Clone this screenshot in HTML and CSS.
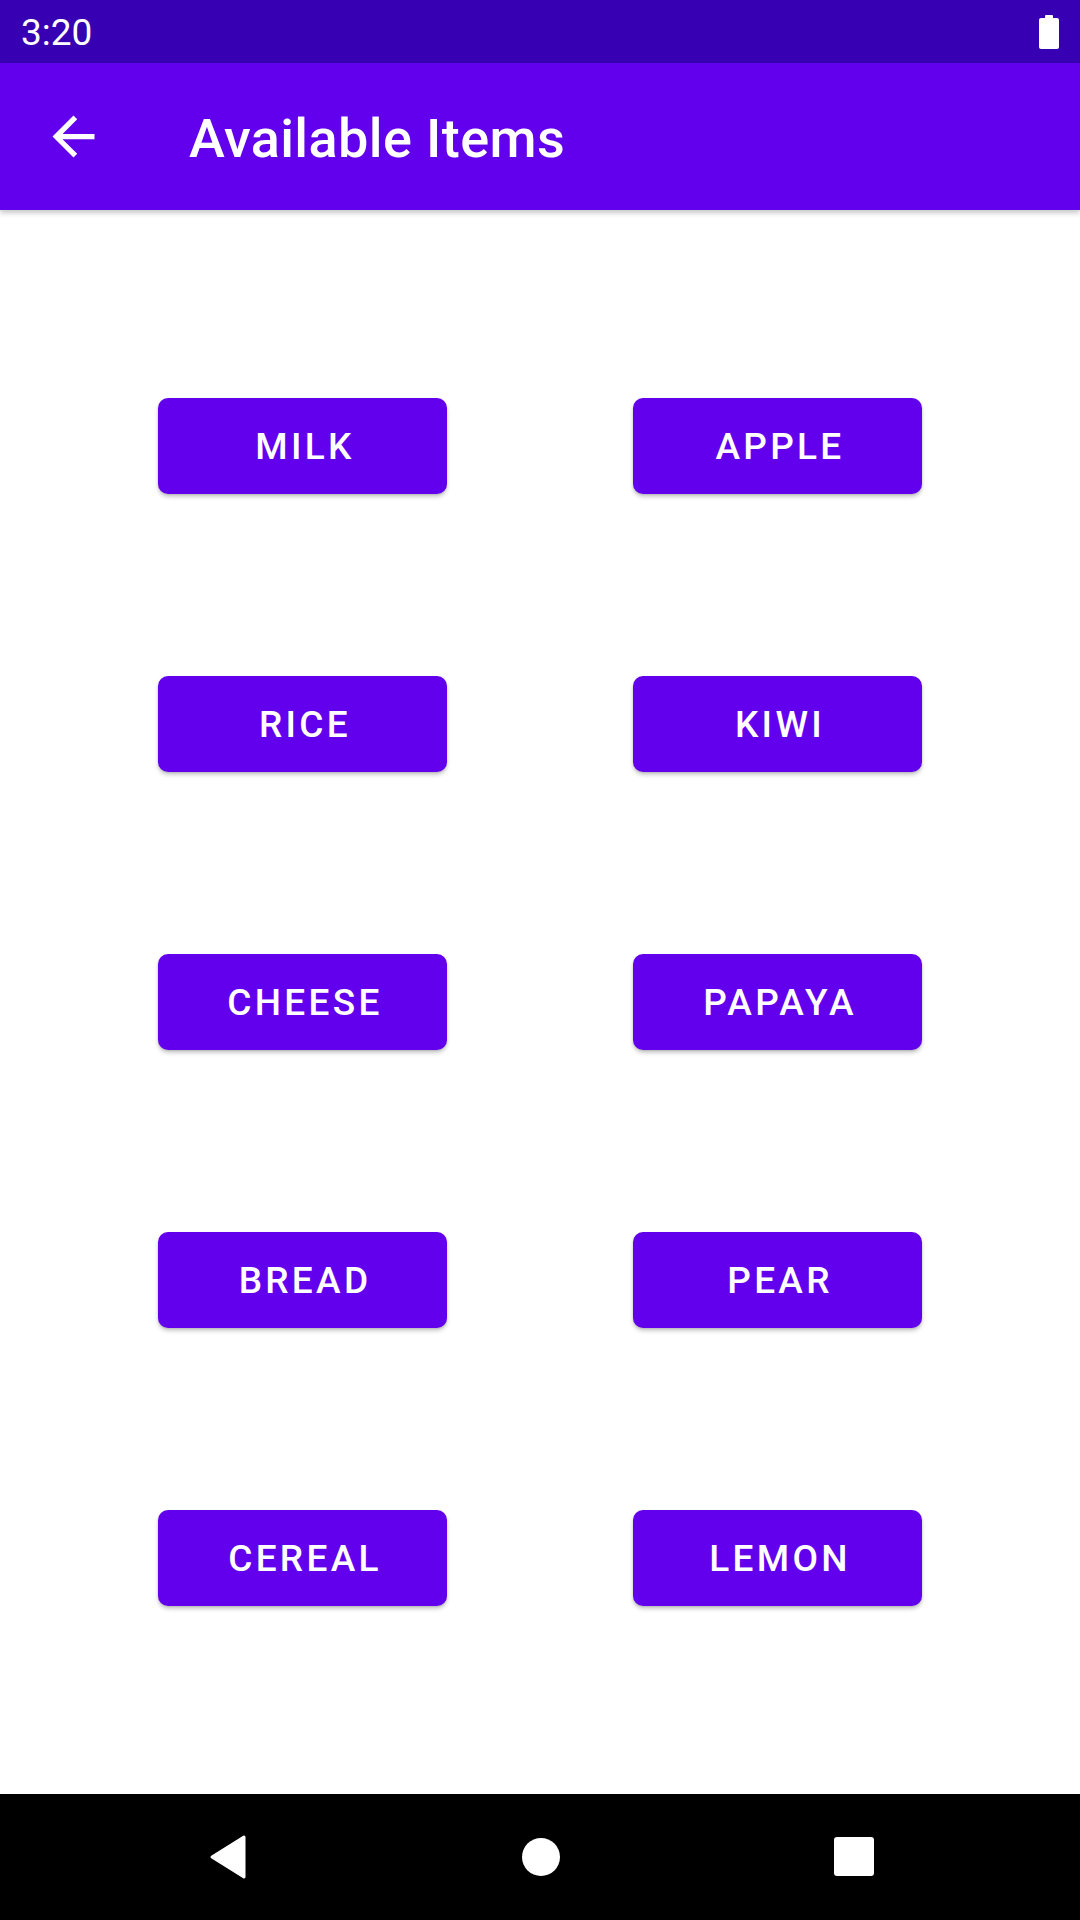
FILE: index.html
```html
<!DOCTYPE html>
<html>
<head>
<meta charset="utf-8">
<link rel="stylesheet" href="styles.css">
</head>
<body>
<div class="screen">
  <div class="status-bar">
    <span class="clock">3:20</span>
    <svg class="battery" width="20" height="34" viewBox="0 0 20 34">
      <rect x="6" y="0" width="8" height="4" rx="1" fill="#fff"/>
      <rect x="0" y="3" width="20" height="31" rx="2" fill="#fff"/>
    </svg>
  </div>
  <div class="app-bar">
    <svg class="back" width="63" height="63" viewBox="0 0 24 24">
      <path fill="#fff" d="M20 11H7.83l5.59-5.59L12 4l-8 8 8 8 1.41-1.41L7.83 13H20v-2z"/>
    </svg>
    <h1 class="title">Available Items</h1>
  </div>
  <main class="content">
    <div class="item">Milk</div>
    <div class="item">Apple</div>
    <div class="item">Rice</div>
    <div class="item">Kiwi</div>
    <div class="item">Cheese</div>
    <div class="item">Papaya</div>
    <div class="item">Bread</div>
    <div class="item">Pear</div>
    <div class="item">Cereal</div>
    <div class="item">Lemon</div>
  </main>
  <div class="nav-bar">
    <svg class="nav-icon" width="64" height="64" viewBox="0 0 64 64">
      <path d="M48 12 L16 32 L48 52 Z" fill="#fff" stroke="#fff" stroke-width="3" stroke-linejoin="round"/>
    </svg>
    <svg class="nav-icon" width="64" height="64" viewBox="0 0 64 64">
      <circle cx="32" cy="32" r="19" fill="#fff"/>
    </svg>
    <svg class="nav-icon" width="64" height="64" viewBox="0 0 64 64">
      <rect x="12" y="12" width="40" height="39" rx="3" fill="#fff"/>
    </svg>
  </div>
</div>
</body>
</html>
```

FILE: styles.css
```css
html, body {
  margin: 0;
  padding: 0;
  background: #ffffff;
}

.screen {
  width: 1080px;
  height: 1920px;
  display: flex;
  flex-direction: column;
  font-family: Roboto, "Noto Sans", "Liberation Sans", sans-serif;
  overflow: hidden;
}

.status-bar {
  height: 63px;
  flex: none;
  background: #3700B3;
  display: flex;
  align-items: center;
  justify-content: space-between;
  padding: 2px 21px 0 21px;
  box-sizing: border-box;
}

.clock {
  color: #fff;
  font-size: 37px;
  font-weight: 400;
  line-height: 1;
}

.battery {
  display: block;
  margin-top: -2px;
}

.app-bar {
  height: 147px;
  flex: none;
  background: #6200EE;
  display: flex;
  align-items: center;
  box-shadow: 0 3px 5px rgba(0, 0, 0, 0.22);
  position: relative;
  z-index: 1;
}

.back {
  margin-left: 42px;
  display: block;
}

.title {
  margin: 0 0 0 84px;
  padding-top: 5px;
  color: #fff;
  font-size: 54px;
  font-weight: 500;
  line-height: 1;
  letter-spacing: 0.4px;
}

.content {
  flex: 1;
  display: grid;
  grid-template-columns: 289px 289px;
  grid-auto-rows: 96px;
  column-gap: 186px;
  row-gap: 182px;
  justify-content: center;
  align-content: start;
  padding-top: 188px;
}

.item {
  background: #6200EE;
  border-radius: 10px;
  color: #fff;
  display: flex;
  align-items: center;
  justify-content: center;
  padding-left: 5px;
  font-size: 37px;
  font-weight: 500;
  letter-spacing: 3.3px;
  text-transform: uppercase;
  box-shadow: 0 3px 4px rgba(0, 0, 0, 0.2), 0 1px 2px rgba(0, 0, 0, 0.12);
}

.nav-bar {
  height: 126px;
  flex: none;
  background: #000;
  display: flex;
  align-items: center;
  justify-content: center;
  gap: 249px;
  padding-left: 2px;
}

.nav-icon {
  display: block;
}
```
